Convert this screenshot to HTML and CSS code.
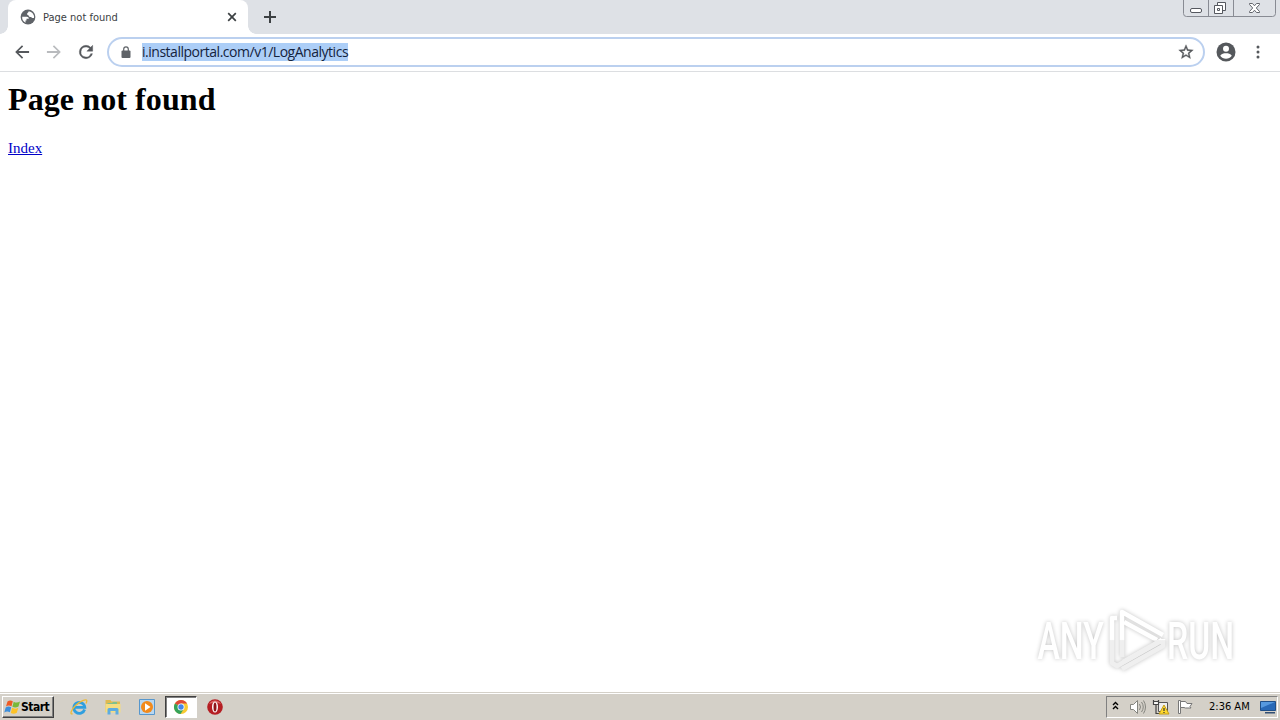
FILE: index.html
```html
<!DOCTYPE html>
<html lang="en">
<head>
    <meta charset="UTF-8">
    <meta name="viewport" content="width=device-width, initial-scale=1.0">
    <title>Page not found</title>
    <link rel="stylesheet" href="styles.css">
</head>
<body>
    <header class="tab-strip">
        <div class="tab">
            <svg class="globe" viewBox="0 0 16 16">
                <circle cx="8" cy="8" r="7.4" fill="#5f6368"/>
                <path d="M2.200 7.800h4.600c1.300 0 2 .8 2 2H6.500v1.600h-1v2.300A6 6 0 0 1 2.200 7.800z" fill="#fff"/>
                <path d="M8.700 2.200c.2 1.400-1.500 1.300-1.700 2.700-.1 1 1.500.8 1.700 1.800.2.900.9 1.200 2.300 1.200l1.200 1.200H14a6 6 0 0 0-5.300-6.900z" fill="#fff"/>
            </svg>
            <span class="tab-title">Page not found</span>
            <svg class="tab-close" viewBox="0 0 10 10"><path d="M1.200 1.200l7.600 7.600M8.800 1.200L1.200 8.800" stroke="#3c4043" stroke-width="1.700"/></svg>
        </div>
        <svg class="new-tab" viewBox="0 0 12 12"><path d="M6 0v12M0 6h12" stroke="#3c4043" stroke-width="2"/></svg>
        <svg class="window-buttons" viewBox="0 0 94 18" fill="none">
            <path d="M.5 0v13.500q0 3 3 3h86q3 0 3-3V0M25.500 0v16M50.500 0v16" stroke="#888b93"/>
            <rect x="7.500" y="8.500" width="11" height="4" rx="1.500" fill="#fff" stroke="#55585f"/>
            <path d="M34.500 2.500h8v8h-8z" fill="#fff" stroke="#55585f"/>
            <path d="M31.500 5.500h8v8h-8z" fill="#fff" stroke="#55585f"/>
            <path d="M34.500 8.500h2v2h-2z" stroke="#55585f"/>
            <path d="M66.500 3.500h3l2 2.300 2-2.300h3v1L73.300 8l3.200 3.500v1h-3l-2-2.300-2 2.300h-3v-1L69.700 8l-3.200-3.500z" fill="#fff" stroke="#62656c"/>
        </svg>
    </header>

    <nav class="toolbar">
        <svg class="nav-icon" viewBox="0 0 24 24" fill="#55585c"><path d="M20.500 10.900H7.800l5.600-5.600L12 3.800 3.800 12l8.200 8.200 1.400-1.500-5.600-5.600h12.700z"/></svg>
        <svg class="nav-icon" viewBox="0 0 24 24" fill="#b9bbbe"><path d="M3.500 10.900h12.700l-5.600-5.600L12 3.800l8.200 8.200-8.200 8.200-1.400-1.500 5.600-5.600H3.500z"/></svg>
        <svg class="nav-icon" viewBox="0 0 24 24" fill="#55585c"><path d="M17.650 6.350A7.960 7.960 0 0 0 12 4a8 8 0 1 0 7.730 10h-2.080A6 6 0 1 1 12 6c1.660 0 3.140.69 4.220 1.780L13 11h7V4l-2.350 2.350z" stroke="#55585c" stroke-width=".5"/></svg>
        <div class="omnibox">
            <svg class="lock" viewBox="0 0 10 12"><rect x=".5" y="4.500" width="9" height="7.500" rx="1" fill="#5f6368"/><path d="M2.700 5V3.200a2.300 2.300 0 0 1 4.600 0V5" fill="none" stroke="#5f6368" stroke-width="1.200"/></svg>
            <span class="url">i.installportal.com/v1/LogAnalytics</span>
            <svg class="star" viewBox="1 1 22 22" fill="#55585c" stroke="#55585c" stroke-width=".5"><path d="M22 9.240l-7.190-.62L12 2 9.190 8.630 2 9.240l5.460 4.730L5.820 21 12 17.270 18.180 21l-1.630-7.030L22 9.240zM12 15.400l-3.760 2.270 1-4.280-3.320-2.880 4.380-.38L12 6.100l1.710 4.040 4.380.38-3.320 2.880 1 4.280L12 15.400z"/></svg>
        </div>
        <svg class="avatar" viewBox="0 0 20 20"><circle cx="10" cy="10" r="9.500" fill="#55585c"/><circle cx="10" cy="6.700" r="3" fill="#fff"/><path d="M4.200 13.700c1.200-1.900 3.600-2.500 5.800-2.500s4.600.6 5.800 2.500a7 7 0 0 1-11.600 0z" fill="#fff"/></svg>
        <svg class="menu-dots" viewBox="0 0 4 14" fill="#55585c"><circle cx="2" cy="2" r="1.500"/><circle cx="2" cy="7" r="1.500"/><circle cx="2" cy="12" r="1.500"/></svg>
    </nav>

    <main class="page">
        <h1>Page not found</h1>
        <a href="#">Index</a>

        <svg class="watermark" viewBox="0 0 220 80">
            <defs>
                <linearGradient id="fade" gradientUnits="userSpaceOnUse" x1="0" y1="10" x2="0" y2="70">
                    <stop offset="0.49" stop-color="#fff"/>
                    <stop offset="0.51" stop-color="#efefef"/>
                </linearGradient>
            </defs>
            <g fill="none" stroke="url(#fade)" stroke-width="4.500" stroke-linejoin="round">
                <path d="M97 57V12l41 23"/>
                <path d="M99 22l33 18M137 40L98 62"/>
                <path d="M92 18h-5v45l5 3 44-25M97 69l41-23v-7"/>
            </g>
            <text class="watermark-text" transform="translate(12.500 59) scale(.66 1)">ANY</text>
            <text class="watermark-text" transform="translate(142 59) scale(.66 1)">RUN</text>
        </svg>
    </main>

    <footer class="taskbar">
        <div class="start">
            <svg class="flag" viewBox="0 0 17 16">
                <path d="M3.500 2.500Q6 .5 8.800 2.200L7.500 7.300Q4.700 5.700 2 7.400z" fill="#ee5a24"/>
                <path d="M9.700 2.700q3 1.800 6.300-.2l-1.500 5q-3.200 1.800-6.100.2z" fill="#79b83a"/>
                <path d="M1.700 8.400q2.800-1.700 5.500-.1L5.900 13.300Q3 11.700.3 13.500z" fill="#3c8edb"/>
                <path d="M8.100 8.800q3 1.700 6.200-.1l-1.500 5q-3.100 1.800-6 .2z" fill="#fdc227"/>
            </svg>
            <span>Start</span>
        </div>
        <div class="launchers">
            <div class="launcher">
                <svg viewBox="0 0 18 18" fill="none"><path d="M14.600 11.500A5.500 5.500 0 1 1 14.800 9.300H5" stroke="#2f9fdf" stroke-width="2.800"/><path d="M2.600 15.700C-.5 17 1 12 5.500 7.500S16.500.5 16.800 2.500c.1.900-.2 1.900-.8 3" stroke="#edba37" stroke-width="1.300"/></svg>
            </div>
            <div class="launcher">
                <svg viewBox="0 0 18 18"><path d="M1.500 2h5l1 1.500H16V14H1.500z" fill="#dfba50"/><path d="M3.500 5h5V4H13v4H3.500z" fill="#7fc08d"/><path d="M1.500 6h15v8.500h-15z" fill="#f5dd82"/><path d="M3.500 16.500v-5q0-1.500 1.500-1.500h8q1.500 0 1.500 1.500v5h-3v-3.500h-5v3.500z" fill="#5eace0"/></svg>
            </div>
            <div class="launcher">
                <svg viewBox="0 0 18 18"><path d="M1.500 1.500h15v15h-15z" fill="#b8d7f1" stroke="#5797cd"/><circle cx="9" cy="9" r="6" fill="#f28a1c"/><path d="M7 5.300l5.500 3.700L7 12.700z" fill="#fff"/></svg>
            </div>
            <div class="launcher active">
                <svg viewBox="0 0 18 18"><circle cx="9" cy="9" r="7" fill="#f8ca32"/><path d="M9 9L2.900 5.500A7 7 0 0 1 15.100 5.500H9z" fill="#df4937"/><path d="M2.900 5.500A7 7 0 0 0 8.500 16l3.500-5.200L9 9z" fill="#36a35a"/><circle cx="9" cy="9" r="3.500" fill="#fff"/><circle cx="9" cy="9" r="2.700" fill="#4586e8"/></svg>
            </div>
            <div class="launcher">
                <svg viewBox="0 0 18 18"><circle cx="9" cy="9" r="7.800" fill="#b51e23"/><path d="M3 6a7 7 0 0 1 12 0q-6-3-12 0z" fill="#dc6866"/><ellipse cx="9" cy="9" rx="3" ry="5.500" fill="#fff"/><ellipse cx="9" cy="9" rx="1.500" ry="4.600" fill="#8f1519"/></svg>
            </div>
        </div>
        <div class="tray">
            <svg class="chevrons" viewBox="0 0 7 9" fill="none" stroke="#000" stroke-width="1.400"><path d="M1 4l2.500-2.500L6 4M1 8l2.500-2.500L6 8"/></svg>
            <svg class="speaker" viewBox="0 0 18 16" fill="none" stroke="#85857f"><path d="M1.500 5.500h3l4-4v13l-4-4h-3z" fill="#fff"/><path d="M10.500 5q2 3 0 6M12.500 3q3.500 5 0 10M14.500 1.500q4 6.500 0 13"/></svg>
            <svg class="network" viewBox="0 0 18 16" fill="none"><path d="M6.500 3.500h9v9h-9z" fill="#eee" stroke="#555"/><path d="M1.500 1v4.500h5V1M1.500 2.500h5M4 6v8.500h8" stroke="#444" stroke-width="1.200"/><path d="M2.200 3.200h3.600v1.700H2.200z" fill="#fff"/><path d="M12 6l5 9H7z" fill="#ffd92e" stroke="#c29c19"/><path d="M12 9v3M12 13v1" stroke="#333" stroke-width="1.200"/></svg>
            <svg class="action-flag" viewBox="0 0 18 16" fill="#fff" stroke="#777"><path d="M2.500 1.500h2v13h-2z"/><path d="M4.500 2.500h5l1.500 2h5l-2 3 1 1.500H9.500L8 8.500H4.500z"/></svg>
            <span class="clock">2:36 AM</span>
            <svg class="desktop" viewBox="0 0 16 14"><path d="M.5 1.500h15v9H.5z" fill="#2869b7" stroke="#204f88"/><path d="M1 2h14L1 8z" fill="#5699df"/><path d="M5 12h10v1.500H5z" fill="#334f73"/></svg>
        </div>
    </footer>
</body>
</html>
```
FILE: styles.css
```css
* {
    box-sizing: border-box;
}
body {
    margin: 0;
    width: 1280px;
    height: 720px;
    overflow: hidden;
    display: flex;
    flex-direction: column;
    background: #fff;
    font-family: "DejaVu Sans Condensed", "DejaVu Sans", sans-serif;
}
svg {
    display: block;
    flex: none;
}

/* Tabs */
.tab-strip {
    height: 34px;
    flex: none;
    display: flex;
    align-items: flex-start;
    padding-left: 8px;
    background: #dee1e6;
}
.tab {
    width: 240px;
    height: 34px;
    display: flex;
    align-items: center;
    padding: 0 11px 0 12px;
    background: #fff;
    border-radius: 8px 8px 0 0;
    position: relative;
}
.tab::before,
.tab::after {
    content: "";
    position: absolute;
    bottom: 0;
    width: 8px;
    height: 8px;
}
.tab::before {
    left: -8px;
    background: radial-gradient(circle at 0 0, #dee1e6 7.5px, #fff 8px);
}
.tab::after {
    right: -8px;
    background: radial-gradient(circle at 100% 0, #dee1e6 7.5px, #fff 8px);
}
.globe {
    width: 16px;
    height: 16px;
}
.tab-title {
    margin-left: 7px;
    font-size: 11px;
    letter-spacing: 0;
    color: #3c4043;
    flex: 1;
}
.tab-close {
    width: 10px;
    height: 10px;
}
.new-tab {
    width: 12px;
    height: 12px;
    margin: 11px 0 0 16px;
}
.window-buttons {
    width: 94px;
    height: 18px;
    margin-left: auto;
    margin-right: 3px;
}

/* Toolbar */
.toolbar {
    height: 38px;
    flex: none;
    display: flex;
    align-items: center;
    padding: 0 20px 1px 12px;
    background: #fff;
    border-bottom: 1px solid #dcdee1;
}
.nav-icon {
    width: 20px;
    height: 20px;
    margin-right: 12px;
}
.omnibox {
    width: 1098px;
    height: 30px;
    margin-left: -1px;
    display: flex;
    align-items: center;
    padding: 0 9px 0 12px;
    border: 2px solid #bbd0ef;
    border-radius: 15px;
}
.lock {
    width: 10px;
    height: 12px;
}
.url {
    height: 18px;
    margin: 0 auto 0 11px;
    line-height: 18px;
    font-family: "Open Sans", sans-serif;
    font-size: 14px;
    letter-spacing: -0.48px;
    white-space: nowrap;
    color: #14233d;
    background: #accef7;
}
.star {
    width: 16px;
    height: 16px;
}
.avatar {
    width: 20px;
    height: 20px;
    margin-left: 11px;
}
.menu-dots {
    width: 4px;
    height: 14px;
    margin-left: auto;
}

/* Page */
.page {
    flex: 1;
    position: relative;
    padding: 9px 8px 8px;
    font-family: "Liberation Serif", serif;
    font-size: 16px;
}
.page h1 {
    margin: 0 0 21px;
    font-size: 32px;
    line-height: 37px;
    letter-spacing: 0.1px;
    color: #000;
}
.page a {
    display: inline-block;
    line-height: 18px;
    font-size: 15px;
    color: #0000c8;
}
.watermark {
    position: absolute;
    right: 35px;
    bottom: 12px;
    width: 220px;
    height: 80px;
    filter: drop-shadow(0 0 2px rgba(0, 0, 0, 0.24));
}
.watermark-text {
    font-family: Roboto, sans-serif;
    font-size: 51px;
    font-weight: 500;
    fill: url(#fade);
}

/* Taskbar */
.taskbar {
    height: 28px;
    flex: none;
    display: flex;
    align-items: center;
    padding: 1px 2px;
    background: #d4d0c8;
    border-top: 1px solid #d4d0c8;
    box-shadow: inset 0 1px #fff;
}
.start {
    width: 52px;
    height: 22px;
    display: flex;
    align-items: center;
    padding-left: 1px;
    border: 1px solid;
    border-color: #fff #404040 #404040 #fff;
    box-shadow: inset -1px -1px #808080;
    font-size: 12px;
    font-weight: bold;
    letter-spacing: -0.5px;
}
.flag {
    width: 17px;
    height: 16px;
}
.launchers {
    display: flex;
    margin-left: 9px;
    gap: 2px;
}
.launcher {
    width: 32px;
    height: 22px;
    display: flex;
    align-items: center;
    justify-content: center;
}
.launcher svg {
    width: 18px;
    height: 18px;
}
.launcher.active {
    background: #fff;
    border: 1px solid;
    border-color: #404040 #fff #fff #404040;
    box-shadow: inset 1px 1px #808080;
}
.tray {
    width: 172px;
    height: 22px;
    margin-left: auto;
    display: flex;
    align-items: center;
    padding-left: 5px;
    border: 1px solid;
    border-color: #808080 #fff #fff #808080;
}
.chevrons {
    width: 7px;
    height: 9px;
    margin-bottom: 2px;
}
.speaker {
    width: 18px;
    height: 16px;
    margin-left: 10px;
}
.network {
    width: 18px;
    height: 16px;
    margin-left: 5px;
}
.action-flag {
    width: 18px;
    height: 16px;
    margin-left: 6px;
}
.clock {
    width: 42px;
    margin-left: 15px;
    font-size: 11px;
    letter-spacing: 0;
    white-space: nowrap;
}
.desktop {
    width: 16px;
    height: 14px;
    margin-left: 9px;
}
```
